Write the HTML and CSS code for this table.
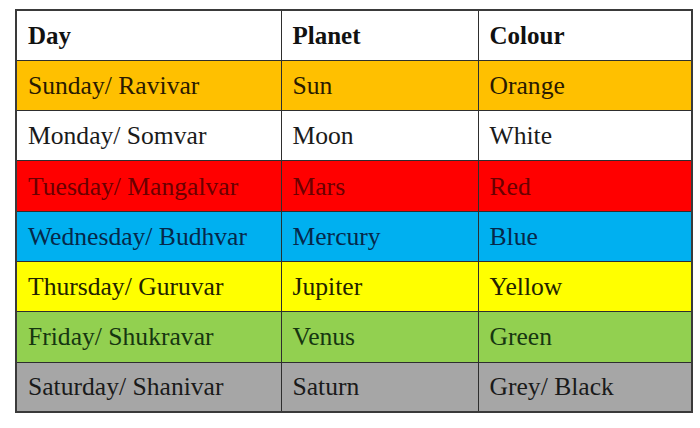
FILE: index.html
```html
<!DOCTYPE html>
<html>
<head>
<meta charset="utf-8">
<link rel="stylesheet" href="styles.css">
</head>
<body>
<table class="grid">
  <colgroup><col class="c1"><col class="c2"><col class="c3"></colgroup>
  <tr class="head"><th>Day</th><th>Planet</th><th>Colour</th></tr>
  <tr class="sun"><td>Sunday/ Ravivar</td><td>Sun</td><td>Orange</td></tr>
  <tr class="mon"><td>Monday/ Somvar</td><td>Moon</td><td>White</td></tr>
  <tr class="tue"><td>Tuesday/ Mangalvar</td><td>Mars</td><td>Red</td></tr>
  <tr class="wed"><td>Wednesday/ Budhvar</td><td>Mercury</td><td>Blue</td></tr>
  <tr class="thu"><td>Thursday/ Guruvar</td><td>Jupiter</td><td>Yellow</td></tr>
  <tr class="fri"><td>Friday/ Shukravar</td><td>Venus</td><td>Green</td></tr>
  <tr class="sat"><td>Saturday/ Shanivar</td><td>Saturn</td><td>Grey/ Black</td></tr>
</table>
</body>
</html>
```
FILE: styles.css
```css
html, body {
  margin: 0;
  padding: 0;
  background: #ffffff;
}
body {
  padding: 9px 0 0 15px;
}
.grid {
  border-collapse: collapse;
  width: 676px;
  table-layout: fixed;
  border: 2px solid #3a3a3a;
}
.c1 { width: 265px; }
.c2 { width: 197px; }
.c3 { width: 214px; }
.grid tr { height: 50.3px; }
.grid th, .grid td {
  padding: 1px 0 0 11px;
  border: 1.5px solid #2e2e2e;
  text-align: left;
  vertical-align: middle;
  font-family: "Liberation Serif", "Times New Roman", serif;
  font-size: 25.6px;
  line-height: 28px;
  font-weight: normal;
  color: #1a1a1a;
  white-space: nowrap;
}
.grid th {
  font-weight: bold;
  font-size: 25px;
  color: #111;
}
.head { background: #ffffff; }
.sun { background: #ffc000; }
.sun td { color: #2a1a00; }
.mon { background: #ffffff; }
.tue { background: #ff0000; }
.tue td { color: #6a0000; }
.wed { background: #00b0f0; }
.wed td { color: #06284a; }
.thu { background: #ffff00; }
.thu td { color: #222200; }
.fri { background: #92d050; }
.fri td { color: #163610; }
.sat { background: #a6a6a6; }
.sat td { color: #1a1a1a; }
```
